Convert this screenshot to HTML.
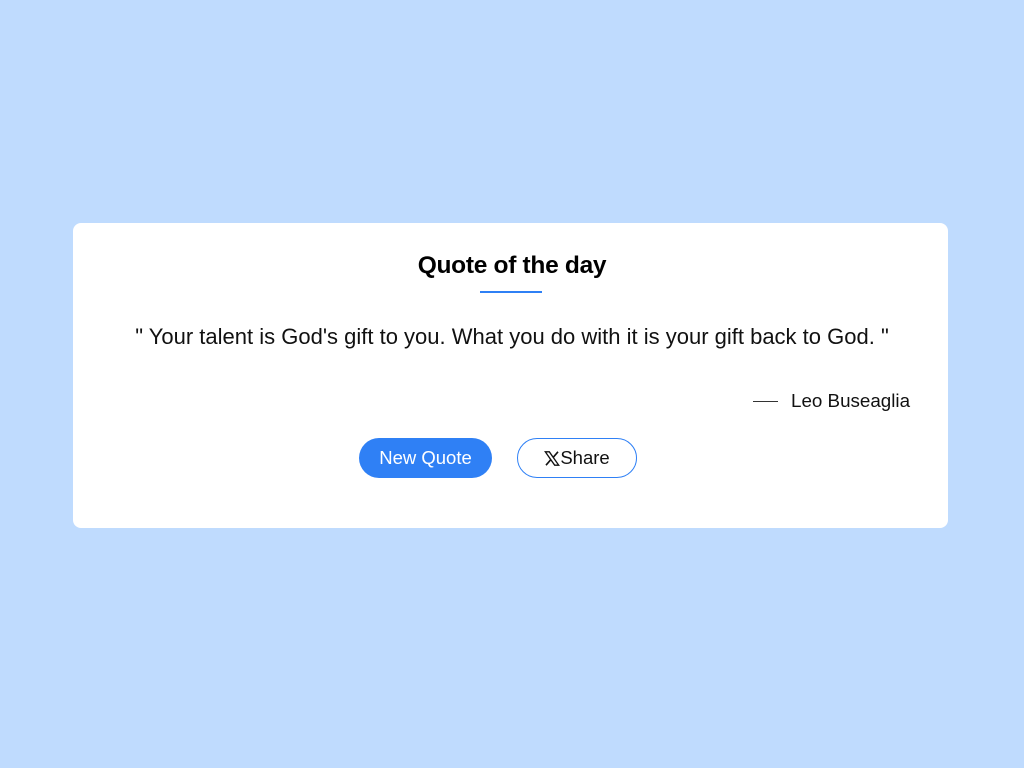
<!DOCTYPE html>
<html><head><style>
body{margin:0;width:1024px;height:768px;background:#bfdbfe;font-family:"Liberation Sans",sans-serif;position:relative;overflow:hidden}
.card{position:absolute;left:73px;top:223px;width:875px;height:305px;background:#fff;border-radius:8px}
h1{position:absolute;left:0;right:0;top:252px;margin:0;text-align:center;font-size:24.5px;font-weight:bold;color:#000;letter-spacing:-0.3px}
.ul{position:absolute;left:480px;top:291px;width:62px;height:2px;background:#2f80f5}
.q{position:absolute;left:0;right:0;top:324px;text-align:center;font-size:22px;color:#111;white-space:nowrap}
.line{position:absolute;left:753px;top:401px;width:25px;height:1px;background:#333}
.auth{position:absolute;left:791px;top:390px;font-size:18.8px;color:#111}
.btn{position:absolute;top:438px;height:40px;border-radius:20px;box-sizing:border-box;font-size:18.5px;display:flex;align-items:center;justify-content:center}
.b1{left:359px;width:133px;background:#2f80f5;color:#fff}
.b2{left:517px;width:120px;border:1px solid #2f80f5;color:#111;background:#fff}
</style></head><body>
<div class="card"></div>
<h1>Quote of the day</h1>
<div class="ul"></div>
<div class="q">" Your talent is God's gift to you. What you do with it is your gift back to God. "</div>
<div class="line"></div>
<div class="auth">Leo Buseaglia</div>
<div class="btn b1">New Quote</div>
<div class="btn b2"><svg width="16" height="15" viewBox="0 0 24 22"><path d="M2 1h6l14 20h-6z" fill="none" stroke="#111" stroke-width="2"/><path d="M21 1L14 9M3 21l7-8" stroke="#111" stroke-width="2.4"/></svg>Share</div>
</body></html>
